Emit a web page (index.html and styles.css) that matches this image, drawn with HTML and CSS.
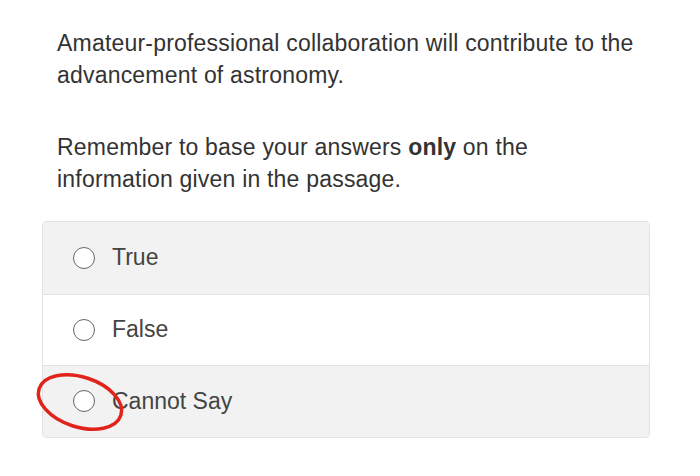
FILE: index.html
```html
<!DOCTYPE html>
<html lang="en">
<head>
    <meta charset="UTF-8">
    <meta name="viewport" content="width=device-width, initial-scale=1.0">
    <title>Question</title>
    <link rel="stylesheet" href="styles.css">
</head>
<body>
    <div class="question">
        <p class="statement">Amateur-professional collaboration will contribute to the advancement of astronomy.</p>
        <p class="hint">Remember to base your answers <b>only</b> on the information given in the passage.</p>
        <div class="options">
            <label class="option">
                <span class="radio"></span>
                <span class="option-text">True</span>
            </label>
            <label class="option">
                <span class="radio"></span>
                <span class="option-text">False</span>
            </label>
            <label class="option marked">
                <span class="radio"></span>
                <span class="option-text">Cannot Say</span>
                <svg class="scribble" width="96" height="66" viewBox="0 0 96 66">
                    <ellipse cx="48" cy="33" rx="43" ry="25" transform="rotate(18 48 33)" fill="none" stroke="#e0241b" stroke-width="3.5"/>
                </svg>
            </label>
        </div>
    </div>
</body>
</html>
```

FILE: styles.css
```css
* {
    margin: 0;
    padding: 0;
    box-sizing: border-box;
}

body {
    background: #fff;
    font-family: 'Liberation Sans', Arial, sans-serif;
    color: #333;
}

.question {
    padding: 27px 50px 0 42px;
}

.statement,
.hint {
    font-size: 23px;
    line-height: 32px;
    letter-spacing: 0.2px;
    padding-left: 15px;
}

.statement {
    margin-bottom: 40px;
}

.hint {
    margin-bottom: 26px;
}

.options {
    width: 608px;
    border: 1px solid #e2e2e2;
    border-radius: 4px;
}

.option {
    position: relative;
    display: flex;
    align-items: center;
    height: 71.5px;
    padding-left: 30px;
    background: #f2f2f2;
    font-size: 23px;
    color: #444;
}

.option + .option {
    border-top: 1px solid #e2e2e2;
}

.option:nth-child(2) {
    background: #fff;
}

.radio {
    width: 22px;
    height: 22px;
    border: 1.5px solid #666;
    border-radius: 50%;
    background: #fff;
    margin-right: 17px;
}

.scribble {
    position: absolute;
    left: -11px;
    top: 3px;
}
```
